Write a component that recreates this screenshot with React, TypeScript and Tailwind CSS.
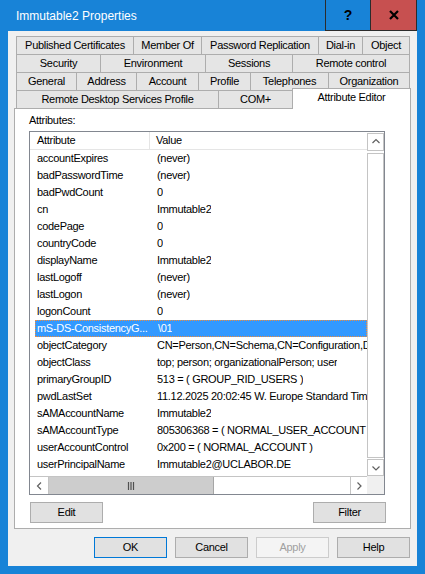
import React from "react";

const rows: [string, string][] = [
  ["accountExpires", "(never)"],
  ["badPasswordTime", "(never)"],
  ["badPwdCount", "0"],
  ["cn", "Immutable2"],
  ["codePage", "0"],
  ["countryCode", "0"],
  ["displayName", "Immutable2"],
  ["lastLogoff", "(never)"],
  ["lastLogon", "(never)"],
  ["logonCount", "0"],
  ["mS-DS-ConsistencyG...", "\\01"],
  ["objectCategory", "CN=Person,CN=Schema,CN=Configuration,DC=uclabor,DC=de"],
  ["objectClass", "top; person; organizationalPerson; user"],
  ["primaryGroupID", "513 = ( GROUP_RID_USERS )"],
  ["pwdLastSet", "11.12.2025 20:02:45 W. Europe Standard Time"],
  ["sAMAccountName", "Immutable2"],
  ["sAMAccountType", "805306368 = ( NORMAL_USER_ACCOUNT )"],
  ["userAccountControl", "0x200 = ( NORMAL_ACCOUNT )"],
  ["userPrincipalName", "Immutable2@UCLABOR.DE"],
];

type Tab = [string, number];
const tabRows: Tab[][] = [
  [["Published Certificates", 117], ["Member Of", 68], ["Password Replication", 117], ["Dial-in", 44], ["Object", 48]],
  [["Security", 84], ["Environment", 105], ["Sessions", 87], ["Remote control", 118]],
  [["General", 60], ["Address", 60], ["Account", 62], ["Profile", 52], ["Telephones", 78], ["Organization", 82]],
];

function TabCell({ label, w, last }: { label: string; w: number; last?: boolean }) {
  return (
    <div
      className={`h-[18px] shrink-0 flex items-center justify-center border-t border-l border-[#adadad] bg-[#e5e5e5] ${last ? "border-r" : ""}`}
      style={{ width: w }}
    >
      <span className="whitespace-nowrap">{label}</span>
    </div>
  );
}

function Btn({ label, w = 73, variant = "normal" }: { label: string; w?: number; variant?: "normal" | "default" | "disabled" }) {
  const cls =
    variant === "default"
      ? "border-[#0078d7] bg-[#e1e1e1] text-black"
      : variant === "disabled"
      ? "border-[#cccccc] bg-[#f4f4f4] text-[#a0a0a0]"
      : "border-[#adadad] bg-[#e1e1e1] text-black";
  return (
    <div className={`h-[21px] shrink-0 flex items-center justify-center border ${cls}`} style={{ width: w }}>
      {label}
    </div>
  );
}

function Chevron({ dir }: { dir: "up" | "down" | "left" | "right" }) {
  const d =
    dir === "up"
      ? "M1.5 6 L5 2.5 L8.5 6"
      : dir === "down"
      ? "M1.5 3.5 L5 7 L8.5 3.5"
      : dir === "left"
      ? "M6 1.5 L2.5 5 L6 8.5"
      : "M3.5 1.5 L7 5 L3.5 8.5";
  return (
    <svg width="10" height="10" viewBox="0 0 10 10">
      <path d={d} fill="none" stroke="#606060" strokeWidth="1.2" />
    </svg>
  );
}

export default function App() {
  return (
    <div className="w-[425px] h-[574px] bg-[#1883d7] flex flex-col font-['Liberation_Sans',Arial,sans-serif] overflow-hidden">
      {/* Title bar */}
      <div className="h-[31px] flex items-start shrink-0">
        <div className="flex-1 h-[31px] flex items-center pl-[16px] text-white text-[12px]">Immutable2 Properties</div>
        <div className="flex h-[31px] mr-[8px] border-l border-b border-r border-[#2b2b2b]">
          <div className="w-[45px] h-[30px] flex items-center justify-center text-black font-bold text-[14px] border-r border-[#2b2b2b]">
            ?
          </div>
          <div className="w-[45px] h-[30px] bg-[#c75050] flex items-center justify-center">
            <svg width="10" height="10" viewBox="0 0 10 10">
              <path d="M1 1 L9 9 M9 1 L1 9" stroke="#000" strokeWidth="2.2" />
            </svg>
          </div>
        </div>
      </div>

      {/* Client area */}
      <div className="mx-[8px] h-[535px] bg-[#f0f0f0] flex flex-col pt-[5px] text-[11px] tracking-[-0.3px] text-black">
        <div className="relative z-10 px-[8px] flex flex-col">
          {tabRows.map((row, i) => (
            <div key={i} className="flex h-[18px]">
              {row.map(([l, w], j) => (
                <TabCell key={l} label={l} w={w} last={j === row.length - 1} />
              ))}
            </div>
          ))}
          <div className="flex h-[18px] items-end">
            <TabCell label="Remote Desktop Services Profile" w={202} />
            <TabCell label="COM+" w={74} />
            <div className="w-[119px] h-[21px] -mb-px shrink-0 bg-white border-t border-l border-r border-[#adadad] flex items-center justify-center">
              <span className="whitespace-nowrap -mt-[3px]">Attribute Editor</span>
            </div>
          </div>
        </div>

        {/* Panel */}
        <div className="relative ml-[6px] w-[397px] h-[421px] shrink-0 bg-white border border-[#adadad] flex flex-col">
          <div className="h-[22px] flex items-center pl-[14px]">Attributes:</div>
          <div className="ml-[14px] w-[356px] h-[364px] border border-[#828790] flex flex-col">
            <div className="flex h-[344px]">
              <div className="w-[337px] flex flex-col overflow-hidden">
                <div className="h-[18px] shrink-0 flex border-b border-[#e5e5e5]">
                  <div className="w-[120px] pl-[7px] flex items-center border-r border-[#e5e5e5]">Attribute</div>
                  <div className="pl-[6px] flex items-center">Value</div>
                </div>
                <div className="flex flex-col">
                  {rows.map(([a, v]) => {
                    const sel = a.startsWith("mS-DS");
                    return (
                      <div
                        key={a}
                        className={`ml-[5px] w-[332px] h-[17px] shrink-0 flex items-center whitespace-nowrap overflow-hidden ${
                          sel ? "bg-[#3399ff] text-white border border-dotted border-[#f08c3c]" : ""
                        }`}
                      >
                        <div className={`w-[120px] shrink-0 overflow-hidden ${sel ? "pl-[1px]" : "pl-[2px]"}`}>{a}</div>
                        <div className="pl-[2px] overflow-hidden">{v}</div>
                      </div>
                    );
                  })}
                </div>
              </div>
              {/* vertical scrollbar */}
              <div className="w-[17px] flex flex-col bg-white">
                <div className="h-[18px] mt-px shrink-0 border border-[#c4c4c4] flex items-center justify-center">
                  <Chevron dir="up" />
                </div>
                <div className="flex-1 mt-[2px] border border-[#c4c4c4]" />
                <div className="h-[17px] mt-px shrink-0 border border-[#c4c4c4] flex items-center justify-center">
                  <Chevron dir="down" />
                </div>
              </div>
            </div>
            {/* horizontal scrollbar */}
            <div className="flex h-[18px]">
              <div className="w-[337px] flex border-t border-[#c4c4c4] bg-white pl-px">
                <div className="w-[18px] border-r border-[#c4c4c4] flex items-center justify-center">
                  <Chevron dir="left" />
                </div>
                <div className="w-[165px] bg-[#cdcdcd] border-r border-[#a6a6a6] flex items-center justify-center">
                  <svg width="8" height="8" viewBox="0 0 8 8">
                    <path d="M1.5 0 V8 M4 0 V8 M6.5 0 V8" stroke="#505050" strokeWidth="1.2" />
                  </svg>
                </div>
                <div className="flex-1" />
                <div className="w-[17px] border-l border-[#c4c4c4] flex items-center justify-center">
                  <Chevron dir="right" />
                </div>
              </div>
              <div className="w-[17px] bg-[#f0f0f0]" />
            </div>
          </div>
          <div className="flex justify-between mt-[7px] pl-[15px] pr-[24px]">
            <Btn label="Edit" />
            <Btn label="Filter" />
          </div>
        </div>

        {/* Bottom buttons */}
        <div className="flex justify-end gap-[8px] mt-[8px] pr-[7px]">
          <Btn label="OK" variant="default" />
          <Btn label="Cancel" />
          <Btn label="Apply" variant="disabled" />
          <Btn label="Help" />
        </div>
      </div>
    </div>
  );
}
